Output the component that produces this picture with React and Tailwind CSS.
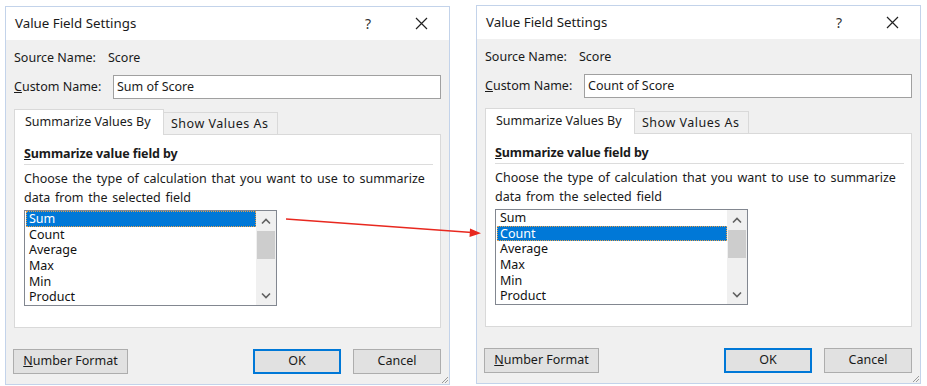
import React from 'react';

const items = ['Sum', 'Count', 'Average', 'Max', 'Min', 'Product'];

function ListBox({ selected }) {
  return (
    <div className="flex w-[253px] h-[96px] border border-[#828790] bg-white overflow-hidden">
      <div className="flex-1 pl-[1px]">
        {items.map((item, i) => (
          <div
            key={item}
            className={`h-[15.7px] leading-[15.7px] pl-[3px] ${
              i === selected
                ? 'bg-[#0078d7] text-white outline-1 outline-dotted outline-[#e6a04a] -outline-offset-1'
                : 'text-[#111]'
            }`}>
            {item}
          </div>
        ))}
      </div>
      <div className="w-[20px] bg-[#f0f0f0] flex flex-col items-center">
        <div className="h-[20px] flex items-center justify-center">
          <svg width="10" height="7" viewBox="0 0 10 7">
            <path d="M1 5.5 L5 1.5 L9 5.5" fill="none" stroke="#606060" strokeWidth="1.6" />
          </svg>
        </div>
        <div className="w-[18px] h-[28px] bg-[#cdcdcd]" />
        <div className="flex-1" />
        <div className="h-[20px] flex items-center justify-center">
          <svg width="10" height="7" viewBox="0 0 10 7">
            <path d="M1 1.5 L5 5.5 L9 1.5" fill="none" stroke="#606060" strokeWidth="1.6" />
          </svg>
        </div>
      </div>
    </div>
  );
}

function Dialog({ customName, selected, className }) {
  return (
    <div className={`w-[445px] border border-[#c3d3ea] bg-[#f0f0f0] ${className}`}>
      {/* Title bar */}
      <div className="h-[33px] bg-white flex items-center pl-[9px] pr-[21px]">
        <span className="flex-1 text-[13.3px] text-[#1a1a1a]">Value Field Settings</span>
        <span className="text-[14px] text-[#333] mr-[44px]">?</span>
        <svg width="13" height="13" viewBox="0 0 13 13">
          <path d="M1 1 L12 12 M12 1 L1 12" stroke="#222" strokeWidth="1.2" />
        </svg>
      </div>

      {/* Body */}
      <div className="pl-[8px] pr-[8px] pt-[8px]">
        <div className="h-[20px] flex items-center">
          <span className="w-[94px]">Source Name:</span>
          <span>Score</span>
        </div>
        <div className="mt-[7px] flex items-center">
          <span className="w-[99px]">
            <span className="underline">C</span>ustom Name:
          </span>
          <div className="flex-1 h-[24px] border border-[#a0a0a0] bg-white flex items-center pl-[3px]">
            {customName}
          </div>
        </div>

        {/* Tabs */}
        <div className="mt-[10px] flex items-end h-[25px] relative z-10">
          <div className="w-[150px] h-[26px] border border-[#d9d9d9] border-b-0 bg-white flex items-center pl-[10px] -mb-[1px]">
            Summarize Values By
          </div>
          <div className="w-[114px] h-[22px] border border-[#d9d9d9] border-l-0 border-b-0 bg-[#f0f0f0] flex items-center pl-[7px] pt-[1px] tracking-[0.5px]">
            Show Values As
          </div>
        </div>

        {/* Panel */}
        <div className="h-[194px] border border-[#d9d9d9] bg-white pl-[9px] pr-[7px]">
          <div className="h-[30px] flex items-center pt-[9px] border-b border-[#dcdcdc] font-bold tracking-[-0.1px]">
            <span>
              <span className="underline">S</span>ummarize value field by
            </span>
          </div>
          <div className="mt-[4px] leading-[19px] [word-spacing:1.5px]">
            Choose the type of calculation that you want to use to summarize
            <br />
            data from the selected field
          </div>
          <div className="mt-[3px]">
            <ListBox selected={selected} />
          </div>
        </div>

        {/* Buttons */}
        <div className="mt-[21px] flex items-center pb-[10px] relative">
          <button className="w-[115px] h-[25px] border border-[#adadad] bg-[#e1e1e1] -ml-[1px]">
            <span className="underline">N</span>umber Format
          </button>
          <div className="flex-1" />
          <button className="w-[88px] h-[25px] border-2 border-[#0078d7] bg-[#e1e1e1]">OK</button>
          <button className="w-[88px] h-[25px] border border-[#adadad] bg-[#e1e1e1] ml-[12px]">
            Cancel
          </button>
          <svg
            className="absolute right-[-8px] bottom-[0px]"
            width="9"
            height="9"
            viewBox="0 0 9 9">
            <path d="M8 2 L2 8 M8 5 L5 8" stroke="#9a9a9a" strokeWidth="1" />
          </svg>
        </div>
      </div>
    </div>
  );
}

export default function App() {
  return (
    <div
      className="relative w-[927px] h-[386px] bg-white text-[12.5px] text-[#1a1a1a] overflow-hidden"
      style={{ fontFamily: '"Noto Sans", "Open Sans", sans-serif' }}>
      <div className="flex items-start pl-[5px] pt-[6px] gap-[26px]">
        <Dialog customName="Sum of Score" selected={0} />
        <Dialog customName="Count of Score" selected={1} className="-mt-[1px]" />
      </div>

      {/* Red arrow */}
      <svg className="absolute left-0 top-0 pointer-events-none" width="927" height="386">
        <line x1="286" y1="219" x2="472" y2="232.5" stroke="#e8281f" strokeWidth="1.6" />
        <path d="M481 233.2 L470 228.6 L469.5 237 Z" fill="#e8281f" />
      </svg>
    </div>
  );
}
